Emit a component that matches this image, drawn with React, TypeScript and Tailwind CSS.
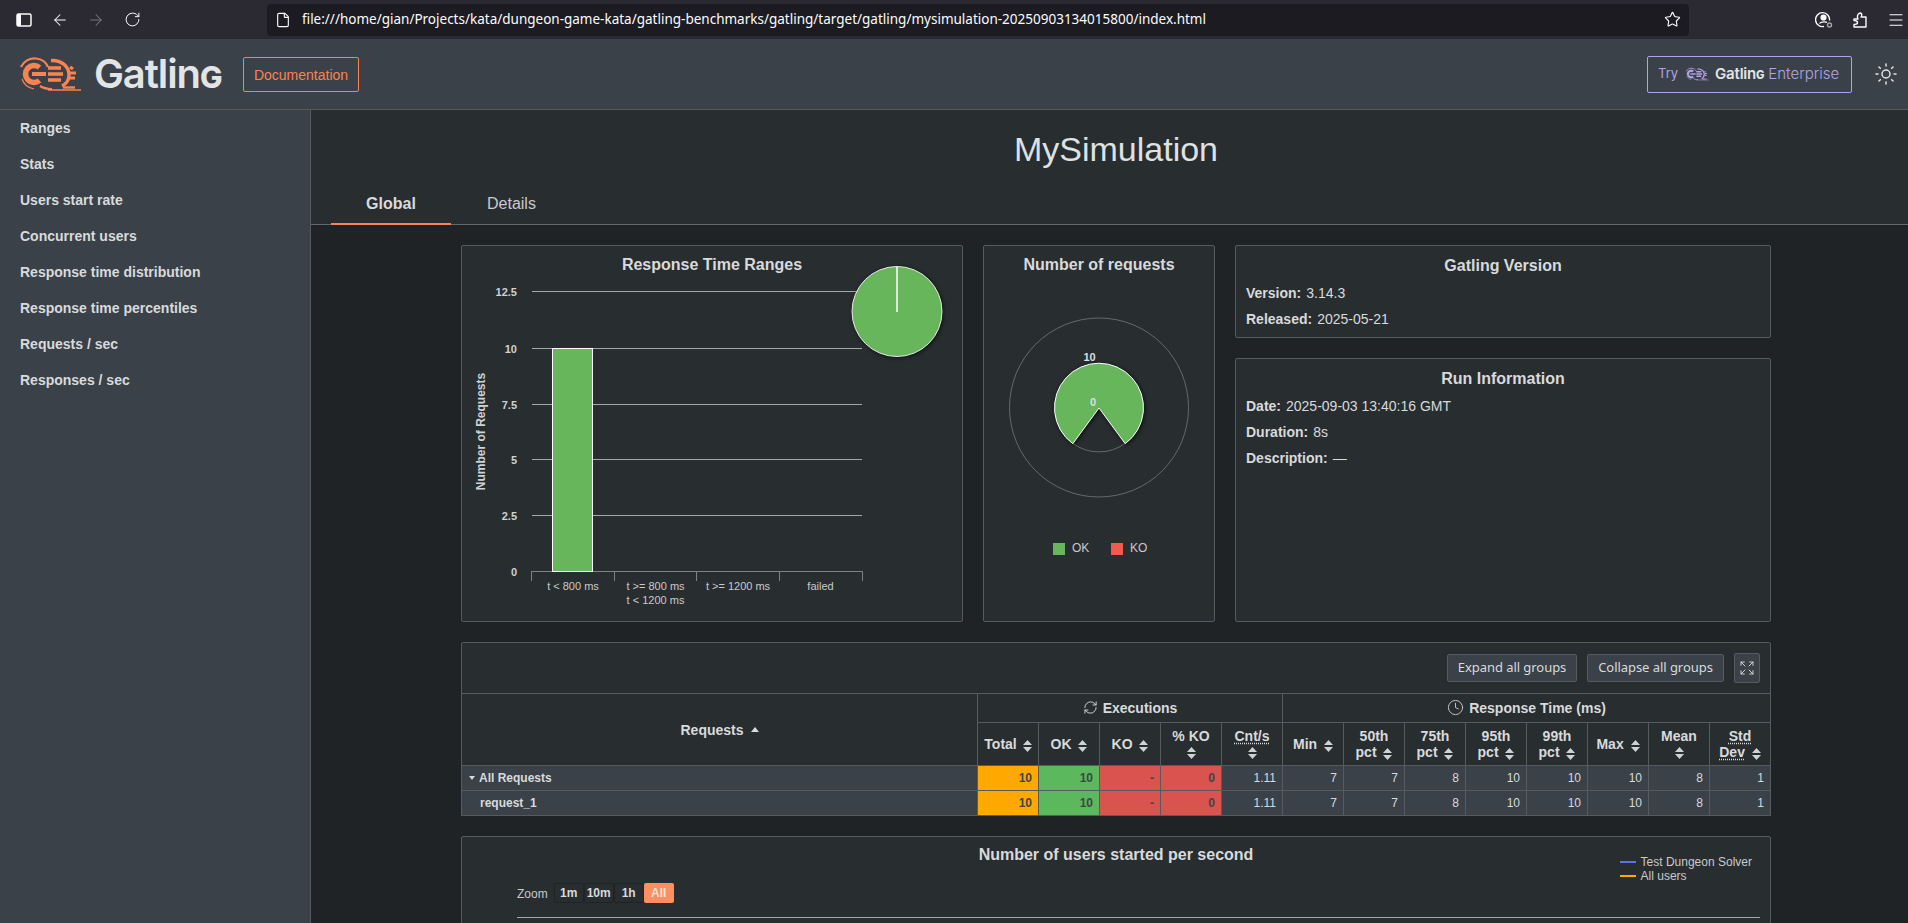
import React from 'react';
import { ArrowLeft, ArrowRight, Clock, Expand, File, Menu, RefreshCw, RotateCw, Star, Sun } from 'lucide-react';

const navItems = [
  'Ranges',
  'Stats',
  'Users start rate',
  'Concurrent users',
  'Response time distribution',
  'Response time percentiles',
  'Requests / sec',
  'Responses / sec',
];

const rows = [
  { name: 'All Requests', group: true },
  { name: 'request_1', group: false },
];

const stats = ['1.11', '7', '7', '8', '10', '10', '10', '8', '1'];

const headerClass = 'border border-[#565b5f] px-1 align-middle text-center text-[14px] leading-[16.5px] font-bold text-[#d8dadc]';
const valueClass = 'border border-[#565b5f] pr-[6px] text-right text-[12px]';

function GatlingLogo({ className }: { className: string }) {
  return (
    <svg viewBox="0 0 72 42" className={className} fill="none" stroke="currentColor">
      <path d="M24.5 14.5A8.5 8.5 0 1 0 24.5 27.5" strokeWidth="5.5" />
      <path d="M17 21H31" strokeWidth="4" />
      <path d="M6 14C9 8 15 5 21 5.5C26 6 31 9 33 14" strokeWidth="2.2" />
      <path d="M7 26C9 32 14 35 19 36" strokeWidth="1.2" />
      <path d="M25 33C29 35.5 33 36 37 36" strokeWidth="2.2" />
      <path d="M33 15H46M33 21H48M33 27H46" strokeWidth="3.4" />
      <path d="M36 7.5C46 7 54 13 54 22C54 27 51 31 47 33" strokeWidth="3.4" />
      <path d="M55 14L58 16M55 20H61M55 25L60 25" strokeWidth="3.2" />
      <path d="M33 37H66" strokeWidth="1.5" />
      <path d="M48 34.5H60" strokeWidth="2.4" />
    </svg>
  );
}

function SortIcon({ className = '' }: { className?: string }) {
  return (
    <svg viewBox="0 0 8 12" preserveAspectRatio="none" className={`inline-block w-[9px] h-[12px] fill-[#cfd1d3] ${className}`}>
      <path d="M0 5L4 0L8 5Z" />
      <path d="M0 7L4 12L8 7Z" />
    </svg>
  );
}

function BrowserBar() {
  return (
    <div className="h-[39px] shrink-0 flex items-center bg-[#2b2a33] text-[#fbfbfe]">
      <div className="pl-[6px] flex items-center">
        <div className="w-9 flex justify-center">
          <svg viewBox="0 0 16 16" className="w-4 h-4">
            <rect x="1" y="2" width="14" height="12" rx="1.5" fill="none" stroke="#fbfbfe" strokeWidth="1.5" />
            <rect x="1" y="2" width="4" height="12" rx="1" fill="#fbfbfe" />
          </svg>
        </div>
        <div className="w-9 flex justify-center">
          <ArrowLeft size={18} strokeWidth={1.4} />
        </div>
        <div className="w-9 flex justify-center text-[#77767c]">
          <ArrowRight size={18} strokeWidth={1.4} />
        </div>
        <div className="w-9 flex justify-center">
          <RotateCw size={17} strokeWidth={1.4} />
        </div>
      </div>
      <div className="ml-[117px] w-[1422px] h-8 rounded-[4px] bg-[#1c1b22] flex items-center pl-[7px] pr-[8px]">
        <File size={16} strokeWidth={1.7} className="ml-[1px]" />
        <span className="ml-[11px] text-[13.5px] [font-family:'Noto_Sans',sans-serif]">
          file:///home/gian/Projects/kata/dungeon-game-kata/gatling-benchmarks/gatling/target/gatling/mysimulation-20250903134015800/index.html
        </span>
        <Star size={17} strokeWidth={1.6} className="ml-auto" />
      </div>
      <div className="ml-auto flex items-center">
        <div className="w-9 flex justify-center">
          <svg viewBox="0 0 18 18" className="w-[18px] h-[18px]" fill="none" stroke="#fbfbfe" strokeWidth="1.4">
            <path d="M14.5 9.5A7 7 0 1 0 9 15.5" />
            <circle cx="8.5" cy="6.5" r="2.4" fill="#fbfbfe" />
            <path d="M4.5 12.5C5.5 10.5 11 10.5 12 11.5" />
            <circle cx="14.5" cy="14" r="2" stroke="#a5a5aa" />
          </svg>
        </div>
        <div className="w-9 flex justify-center">
          <svg viewBox="0 0 16 18" className="w-4 h-[18px]" fill="none" stroke="#fbfbfe" strokeWidth="1.4" strokeLinejoin="round">
            <path d="M2 8H6C5 6 5 3 8 2C9 2 10.5 3 9.5 5L9 6H14V16H2V13.5C4.5 13.5 5.5 12.5 5.5 11.5C5.5 10 4 9.5 2 9.5Z" />
          </svg>
        </div>
        <div className="w-6 mr-0 ml-[6px] flex justify-center">
          <Menu size={18} strokeWidth={1.5} />
        </div>
      </div>
    </div>
  );
}

function Header() {
  return (
    <header className="h-[71px] shrink-0 flex items-center bg-[#3a4148] border-b border-[#555a5e] pl-5">
      <GatlingLogo className="w-[72px] h-[42px] -ml-[5px] text-[#fb8352]" />
      <span className="ml-[7px] w-[129px] text-[#e2e4e6] text-[40px] leading-none font-semibold tracking-[-1.1px] [font-family:Inter,sans-serif]">
        Gatlin<span className="[font-variant:small-caps]">g</span>
      </span>
      <a className="ml-[20px] mt-[1px] pt-[1px] h-[35px] w-[116px] flex items-center justify-center rounded-[2px] border border-[#fb8352] text-[14px] text-[#fb8352]">
        Documentation
      </a>
      <a className="ml-auto h-[37px] w-[205px] flex items-center pl-[10px] rounded-[2px] border border-[#b3a2ea] text-[#b3a2ea] [font-family:Inter,sans-serif]">
        <span className="text-[13px]">Try</span>
        <GatlingLogo className="ml-[6px] w-[27px] h-[16px]" />
        <span className="ml-[4px] text-[15px] font-semibold text-[#e2e4e6] tracking-[-0.2px]">
          Gatlin<span className="[font-variant:small-caps]">g</span>
        </span>
        <span className="ml-[4px] text-[15px] font-light">Enterprise</span>
      </a>
      <div className="ml-[22px] mr-[10px] text-[#e2e4e6]">
        <Sun size={24} strokeWidth={1.5} />
      </div>
    </header>
  );
}

function Sidebar() {
  return (
    <nav className="w-[311px] shrink-0 bg-[#3a4148] border-r border-[#555a5e]">
      {navItems.map((item) => (
        <div key={item} className="h-9 px-5 flex items-center text-[14px] font-bold text-[#d8dadc]">
          {item}
        </div>
      ))}
    </nav>
  );
}

function RangesChart() {
  const grid = [
    { y: 291.5, label: '12.5' },
    { y: 348.5, label: '10' },
    { y: 404.5, label: '7.5' },
    { y: 459.5, label: '5' },
    { y: 515.5, label: '2.5' },
    { y: 571.5, label: '0' },
  ];
  return (
    <svg viewBox="462 284 500 336" className="w-[500px] h-[336px] overflow-visible">
      {grid.map((g) => (
        <React.Fragment key={g.label}>
          <line x1="532" x2="862" y1={g.y} y2={g.y} stroke={g.label === '0' ? '#7d8184' : '#a5a8aa'} />
          <text x="517" y={g.y + 4} textAnchor="end" className="fill-[#cfd1d3] text-[11px] font-bold">
            {g.label}
          </text>
        </React.Fragment>
      ))}
      {[531.5, 614.5, 696.5, 779.5, 862.5].map((x) => (
        <line key={x} x1={x} x2={x} y1="571" y2="581" stroke="#7d8184" />
      ))}
      <rect x="552.5" y="348.5" width="40" height="223" fill="#68b65c" stroke="#fff" />
      <text x="573" y="590" textAnchor="middle" className="fill-[#c8cacc] text-[11px]">t &lt; 800 ms</text>
      <text x="655.5" y="590" textAnchor="middle" className="fill-[#c8cacc] text-[11px]">t &gt;= 800 ms</text>
      <text x="655.5" y="604" textAnchor="middle" className="fill-[#c8cacc] text-[11px]">t &lt; 1200 ms</text>
      <text x="738" y="590" textAnchor="middle" className="fill-[#c8cacc] text-[11px]">t &gt;= 1200 ms</text>
      <text x="820.5" y="590" textAnchor="middle" className="fill-[#c8cacc] text-[11px]">failed</text>
      <text transform="translate(485 431.5) rotate(-90)" textAnchor="middle" className="fill-[#cfd1d3] text-[12px] font-bold">
        Number of Requests
      </text>
      <circle cx="897" cy="311.5" r="45" fill="#68b65c" stroke="#e8e8e8" className="drop-shadow-[1px_1px_2px_rgba(0,0,0,0.6)]" />
      <line x1="897" x2="897" y1="267" y2="312" stroke="#fff" strokeWidth="1.5" />
    </svg>
  );
}

function RequestsChart() {
  return (
    <svg viewBox="984 284 230 336" className="w-[230px] h-[336px]">
      <circle cx="1099" cy="407.5" r="89.5" fill="none" stroke="#66696c" />
      <path d="M1073 443.5A44.5 44.5 0 0 0 1125 443.5" fill="none" stroke="#66696c" />
      <path
        d="M1099 408L1125.2 443.7A44.5 44.5 0 1 0 1072.8 443.7Z"
        fill="#68b65c"
        stroke="#fff"
        className="drop-shadow-[1px_1px_2px_rgba(0,0,0,0.7)]"
      />
      <text x="1089.5" y="361" textAnchor="middle" className="fill-[#dcdee0] text-[11px] font-bold">10</text>
      <text x="1093" y="406" textAnchor="middle" className="fill-[#dcdee0] text-[11px] font-bold">0</text>
      <rect x="1053" y="543" width="12" height="12" fill="#68b65c" />
      <text x="1072" y="552" className="fill-[#c8cacc] text-[12px]">OK</text>
      <rect x="1111" y="543" width="12" height="12" fill="#f15b4f" />
      <text x="1130" y="552" className="fill-[#c8cacc] text-[12px]">KO</text>
    </svg>
  );
}

function ChartCard({ title, width, children }: { title: string; width: string; children: React.ReactNode }) {
  return (
    <div className={`${width} h-[377px] shrink-0 rounded-[2px] border border-[#565b5f] bg-[#282d30]`}>
      <h2 className="h-[38px] flex items-center justify-center text-[16px] font-bold text-[#d8dadc]">{title}</h2>
      {children}
    </div>
  );
}

function InfoLine({ label, value }: { label: string; value: string }) {
  return (
    <div className="h-[26px] flex items-center text-[14px] text-[#d8dadc]">
      <span className="font-bold">{label}</span>
      <span className="ml-[5px]">{value}</span>
    </div>
  );
}

function StatsTable() {
  return (
    <div className="mt-5 rounded-[2px] border border-[#565b5f] bg-[#282d30]">
      <div className="h-[50px] flex items-center justify-end gap-[10px] pr-[10px] [font-family:'Noto_Sans',sans-serif] text-[13px] tracking-[-0.05px] text-[#d8dadc]">
        <button className="h-[28px] w-[130px] rounded-[2px] border border-[#565b5f] bg-[#3a4148]">Expand all groups</button>
        <button className="h-[28px] w-[137px] rounded-[2px] border border-[#565b5f] bg-[#3a4148]">Collapse all groups</button>
        <button className="h-[30px] w-[26px] flex items-center justify-center rounded-[2px] border border-[#565b5f] bg-[#3a4148]">
          <Expand size={16} strokeWidth={1.4} />
        </button>
      </div>
      <table className="w-[1309px] table-fixed border-collapse -ml-px -mb-px">
        <colgroup>
          <col className="w-[516px]" />
          {Array.from({ length: 13 }).map((_, i) => (
            <col key={i} className="w-[61px]" />
          ))}
        </colgroup>
        <thead>
          <tr className="h-[29px]">
            <th rowSpan={2} className="border border-[#565b5f] pt-[2px] text-[14px] font-bold text-[#d8dadc]">
              Requests
              <svg viewBox="0 0 8 5" className="inline-block ml-[7px] mb-[4px] w-[8px] h-[5px] fill-[#d8dadc]">
                <path d="M0 5L4 0L8 5Z" />
              </svg>
            </th>
            <th colSpan={5} className="border border-[#565b5f] text-[14px] font-bold text-[#d8dadc]">
              <RefreshCw size={15} strokeWidth={1.5} className="inline-block mr-[5px] mb-[2px]" />
              Executions
            </th>
            <th colSpan={8} className="border border-[#565b5f] text-[14px] font-bold text-[#d8dadc]">
              <Clock size={17} strokeWidth={1.2} className="inline-block mr-[5px] mb-[2px]" />
              Response Time (ms)
            </th>
          </tr>
          <tr className="h-[43px]">
            <th className={headerClass}>Total <SortIcon className="ml-[2px] -mb-[2px]" /></th>
            <th className={headerClass}>OK <SortIcon className="ml-[3px] -mb-[2px]" /></th>
            <th className={headerClass}>KO <SortIcon className="ml-[3px] -mb-[2px]" /></th>
            <th className={headerClass}>% KO<br /><SortIcon /></th>
            <th className={headerClass}>
              <span className="underline decoration-dotted underline-offset-2">Cnt/s</span><br /><SortIcon />
            </th>
            <th className={headerClass}>Min <SortIcon className="ml-[3px] -mb-[2px]" /></th>
            {['50th', '75th', '95th', '99th'].map((p) => (
              <th key={p} className={headerClass}>{p}<br />pct <SortIcon className="ml-[3px] -mb-[2px]" /></th>
            ))}
            <th className={headerClass}>Max <SortIcon className="ml-[3px] -mb-[2px]" /></th>
            <th className={headerClass}>Mean<br /><SortIcon /></th>
            <th className={headerClass}>
              <span className="underline decoration-dotted underline-offset-2">Std</span><br />
              <span className="underline decoration-dotted underline-offset-2">Dev</span> <SortIcon className="ml-[3px] -mb-[2px]" />
            </th>
          </tr>
        </thead>
        <tbody>
          {rows.map((row) => (
            <tr key={row.name} className="h-[25px] bg-[#3a4148] text-[#d8dadc]">
              <td className="border border-[#565b5f] pl-[7px] text-[12px] font-bold">
                {row.group ? (
                  <svg viewBox="0 0 6 4" className="inline-block w-[6px] h-[4px] mr-[4px] mb-[1px] fill-[#d8dadc]">
                    <path d="M0 0H6L3 4Z" />
                  </svg>
                ) : (
                  <span className="inline-block w-[11px]" />
                )}
                {row.name}
              </td>
              <td className={`${valueClass} bg-[#ffa900] font-bold text-[#3f454b]`}>10</td>
              <td className={`${valueClass} bg-[#5cb85c] font-bold text-[#3f454b]`}>10</td>
              <td className={`${valueClass} bg-[#d9534f] font-bold text-[#3f454b]`}>-</td>
              <td className={`${valueClass} bg-[#d9534f] font-bold text-[#3f454b]`}>0</td>
              {stats.map((v, i) => (
                <td key={i} className={valueClass}>{v}</td>
              ))}
            </tr>
          ))}
        </tbody>
      </table>
    </div>
  );
}

function UsersCard() {
  return (
    <div className="mt-5 h-[200px] rounded-[2px] border border-[#565b5f] bg-[#282d30] pl-[55px] pr-[10px]">
      <div className="grid grid-cols-[1fr_auto_1fr] -ml-[55px] -mr-[10px]">
        <div />
        <h2 className="h-[36px] flex items-center text-[16px] font-bold text-[#d8dadc]">Number of users started per second</h2>
        <div className="pt-[18px] pr-[18px] flex justify-end text-[12px] leading-[14px] text-[#c8cacc]">
          <div>
            <div className="flex items-center"><span className="w-4 h-[2px] mr-[5px] bg-[#5b74e0]" />Test Dungeon Solver</div>
            <div className="flex items-center"><span className="w-4 h-[2px] mr-[5px] bg-[#ffa900]" />All users</div>
          </div>
        </div>
      </div>
      <div className="-mt-[9px] h-[43px] flex items-start">
        <span className="mt-[11px] text-[12px] text-[#c8cacc]">Zoom</span>
        <div className="ml-[6px] mt-[9px] flex text-[12px] font-bold">
          {['1m', '10m', '1h'].map((z) => (
            <span key={z} className="w-[30px] h-5 flex items-center justify-center rounded-[2px] border border-[#1f2326] text-[#d8dadc]">{z}</span>
          ))}
          <span className="w-[30px] h-5 flex items-center justify-center rounded-[2px] bg-[#ff8f60] text-[#f5e3da]">All</span>
        </div>
      </div>
      <div className="border-t border-[#a5a8aa]" />
    </div>
  );
}

export default function App() {
  return (
    <div className="h-screen flex flex-col overflow-hidden bg-[#1f2326] [font-family:'Liberation_Sans',Arial,sans-serif]">
      <BrowserBar />
      <Header />
      <div className="flex-1 flex min-h-0">
        <Sidebar />
        <main className="flex-1 min-w-0">
          <div className="h-[115px] bg-[#282d30] border-b border-[#65696c]">
            <h1 className="pt-[19px] pl-[13px] text-center text-[34px] leading-[41px] text-[#dfe1e3]">MySimulation</h1>
            <div className="mt-[15px] ml-[20px] flex text-[16px]">
              <div className="w-[120px] h-[40px] flex items-center justify-center border-b-2 border-[#fb8352] font-bold text-[#d8dadc]">Global</div>
              <div className="px-9 h-[38px] flex items-center text-[#c8cacc]">Details</div>
            </div>
          </div>
          <div className="ml-[150px] w-[1310px] pt-5">
            <div className="flex gap-[20px]">
              <ChartCard title="Response Time Ranges" width="w-[502px]"><RangesChart /></ChartCard>
              <ChartCard title="Number of requests" width="w-[232px]"><RequestsChart /></ChartCard>
              <div className="flex-1 flex flex-col gap-5">
                <div className="h-[93px] rounded-[2px] border border-[#565b5f] bg-[#282d30] px-[10px]">
                  <h2 className="h-[40px] flex items-center justify-center text-[16px] font-bold text-[#d8dadc]">Gatling Version</h2>
                  <div className="-mt-[6px]">
                    <InfoLine label="Version:" value="3.14.3" />
                    <InfoLine label="Released:" value="2025-05-21" />
                  </div>
                </div>
                <div className="h-[264px] rounded-[2px] border border-[#565b5f] bg-[#282d30] px-[10px]">
                  <h2 className="h-[40px] flex items-center justify-center text-[16px] font-bold text-[#d8dadc]">Run Information</h2>
                  <div className="-mt-[6px]">
                    <InfoLine label="Date:" value="2025-09-03 13:40:16 GMT" />
                    <InfoLine label="Duration:" value="8s" />
                    <InfoLine label="Description:" value="—" />
                  </div>
                </div>
              </div>
            </div>
            <StatsTable />
            <UsersCard />
          </div>
        </main>
      </div>
    </div>
  );
}
